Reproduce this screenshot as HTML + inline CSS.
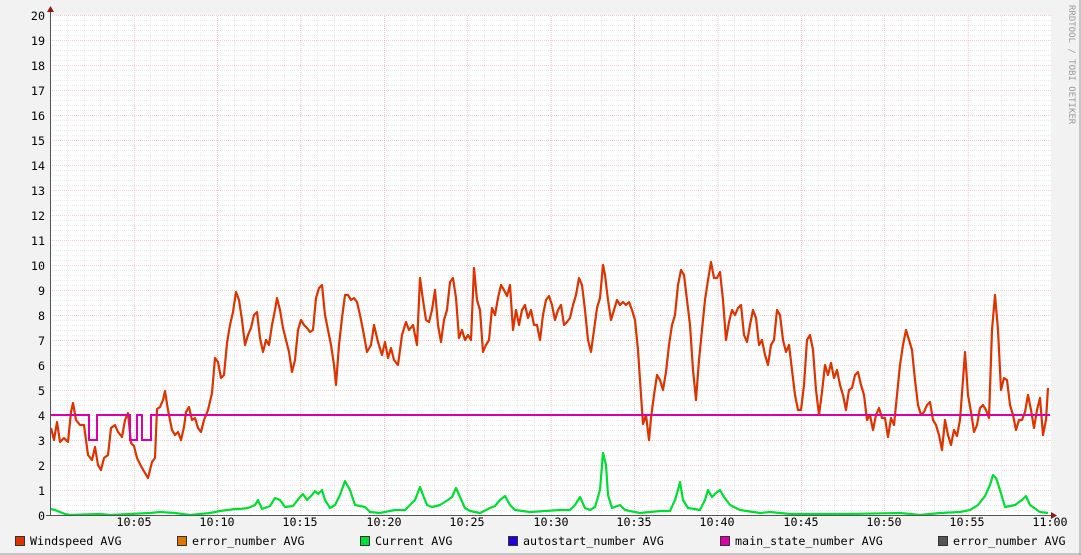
<!DOCTYPE html>
<html><head><meta charset="utf-8"><style>
html,body{margin:0;padding:0;background:#f2f2f2;}
svg{display:block;}
text{font-family:"DejaVu Sans Mono","Liberation Mono",monospace;font-size:11.7px;fill:#000;}
</style></head><body>
<svg width="1081" height="555" viewBox="0 0 1081 555" xmlns="http://www.w3.org/2000/svg">
<defs>
<pattern id="minv" x="50.5" y="0" width="16.68" height="555" patternUnits="userSpaceOnUse">
<line x1="0" y1="0" x2="0" y2="555" stroke="#d8d8d8" stroke-width="1" stroke-dasharray="1,1"/>
</pattern>
<pattern id="minh" x="0" y="15.5" width="1081" height="5" patternUnits="userSpaceOnUse">
<line x1="0" y1="0" x2="1081" y2="0" stroke="#d8d8d8" stroke-width="1" stroke-dasharray="1,1"/>
</pattern>
<pattern id="majv" x="50.5" y="0" width="83.4" height="555" patternUnits="userSpaceOnUse">
<line x1="0" y1="0" x2="0" y2="555" stroke="#eaa0a0" stroke-width="1" stroke-dasharray="1,1"/>
</pattern>
<pattern id="majh" x="0" y="15.5" width="1081" height="25" patternUnits="userSpaceOnUse">
<line x1="0" y1="0" x2="1081" y2="0" stroke="#eaa0a0" stroke-width="1" stroke-dasharray="1,1"/>
</pattern>
</defs>
<rect x="0" y="0" width="1081" height="555" fill="#f2f2f2"/>
<line x1="1080" y1="0" x2="1080" y2="555" stroke="#999" stroke-width="1"/>
<line x1="0" y1="554" x2="1081" y2="554" stroke="#999" stroke-width="1"/>
<rect x="50" y="15" width="1001" height="500" fill="#ffffff"/>
<rect x="50" y="15" width="1001" height="500" fill="url(#minv)"/>
<rect x="50" y="15" width="1001" height="500" fill="url(#minh)"/>
<rect x="50" y="15" width="1001" height="500" fill="url(#majv)"/>
<rect x="50" y="15" width="1001" height="500" fill="url(#majh)"/>

<g text-anchor="end">
<text x="45" y="20">20</text><text x="45" y="45">19</text><text x="45" y="70">18</text><text x="45" y="95">17</text>
<text x="45" y="120">16</text><text x="45" y="145">15</text><text x="45" y="170">14</text><text x="45" y="195">13</text>
<text x="45" y="220">12</text><text x="45" y="245">11</text><text x="45" y="270">10</text><text x="45" y="295">9</text>
<text x="45" y="320">8</text><text x="45" y="345">7</text><text x="45" y="370">6</text><text x="45" y="395">5</text>
<text x="45" y="420">4</text><text x="45" y="445">3</text><text x="45" y="470">2</text><text x="45" y="495">1</text><text x="45" y="520">0</text>
</g>
<g text-anchor="middle">
<text x="134" y="526">10:05</text><text x="217" y="526">10:10</text><text x="300" y="526">10:15</text><text x="384" y="526">10:20</text>
<text x="467" y="526">10:25</text><text x="551" y="526">10:30</text><text x="634" y="526">10:35</text><text x="717" y="526">10:40</text>
<text x="801" y="526">10:45</text><text x="884" y="526">10:50</text><text x="967" y="526">10:55</text><text x="1050" y="526">11:00</text>
</g>

<polyline fill="none" stroke="#00dd33" stroke-width="2.2" stroke-linejoin="round" points="51,509 55,510 60,512 65,514 70,515 100,514 110,515 150,513 160,512 175,513 190,515 210,513 220,511 235,509 240,509 248,508 255,505 258,500 262,509 270,506 275,498 280,500 285,507 293,506 300,497 303,494 307,500 312,495 315,491 318,494 322,490 325,500 330,508 335,505 340,495 345,481 350,490 355,505 365,507 370,512 380,513 395,510 405,510 410,505 415,500 420,487 423,495 427,505 432,507 440,505 448,500 452,497 456,488 460,497 465,508 470,511 480,513 490,508 495,506 500,500 505,496 510,505 515,510 530,512 560,510 570,510 575,505 580,497 585,508 590,510 595,507 600,490 603,453 606,465 608,495 612,508 620,505 625,510 640,513 650,512 660,511 670,511 675,500 678,490 680,482 683,500 688,508 700,510 705,500 708,490 712,497 716,493 720,490 724,497 730,505 740,510 760,513 770,512 790,514 850,514 900,513 920,515 940,513 960,512 970,510 978,505 985,496 990,485 993,475 996,478 1000,490 1005,507 1015,505 1022,500 1026,496 1030,505 1040,512 1048,513"/>

<polyline fill="none" stroke="#dd3300" stroke-width="2.2" stroke-linejoin="round" points="51,428 54,440 57,422 60,442 64,438 68,442 71,412 73,403 76,420 80,425 84,425 88,455 92,460 95,447 98,465 101,470 104,458 108,455 111,428 115,425 118,432 122,437 125,420 128,413 131,443 134,446 137,458 141,466 145,473 148,478 152,462 155,458 157,409 160,407 163,400 165,391 168,410 172,430 175,435 178,432 181,440 184,427 186,412 189,407 192,420 195,418 198,428 201,432 204,420 208,410 212,393 215,358 218,362 221,378 224,375 227,343 230,325 233,312 236,292 239,300 242,320 245,345 248,335 251,328 254,315 257,312 260,338 263,352 266,340 269,345 272,325 275,310 277,298 280,310 283,328 286,340 289,352 292,372 295,360 298,330 301,320 304,325 307,328 310,332 313,330 316,298 319,288 322,285 325,315 328,330 331,345 334,365 336,385 339,345 342,318 345,295 348,295 351,300 354,298 357,302 360,315 363,330 367,352 371,345 374,325 378,342 382,355 385,342 388,358 391,348 394,360 398,365 402,335 406,322 409,330 413,325 417,345 420,278 423,300 426,320 429,322 432,310 435,290 438,325 441,342 444,320 447,310 450,282 453,278 456,298 459,338 462,330 465,340 468,335 471,340 474,268 477,300 480,310 483,352 486,345 489,340 492,308 495,315 498,298 501,285 504,290 507,296 510,285 513,330 516,310 519,325 522,310 525,305 528,318 531,310 534,325 537,325 540,340 543,315 546,300 549,296 552,305 555,320 558,310 561,305 564,325 567,322 570,318 573,305 576,295 579,278 582,285 585,310 588,340 591,352 594,330 597,308 600,298 603,265 605,275 608,300 611,320 614,310 617,300 620,305 623,302 626,305 629,302 632,310 635,320 638,350 641,395 643,424 646,415 649,440 651,418 654,395 657,375 660,380 663,390 666,372 669,345 672,325 675,315 678,285 681,270 684,275 687,300 690,325 693,370 696,400 699,360 702,330 705,300 708,280 711,262 714,278 717,278 720,272 723,300 726,340 729,322 732,310 735,315 738,308 741,305 744,335 747,342 750,325 753,310 756,318 759,345 762,340 765,355 768,365 771,345 774,340 777,310 780,315 783,340 786,352 789,345 792,370 795,395 798,410 801,410 804,385 807,340 810,335 813,350 816,390 819,415 822,392 825,365 828,375 831,363 834,378 837,370 840,385 843,395 846,410 849,390 852,388 855,375 858,372 861,385 864,395 867,420 870,415 873,430 876,415 879,408 882,418 885,418 888,437 891,418 894,425 897,395 900,365 903,345 906,330 909,340 912,350 915,380 918,405 921,415 924,412 927,405 930,402 933,420 936,425 939,435 942,450 945,420 948,435 951,445 954,430 957,436 960,420 963,380 965,352 968,395 971,412 974,432 977,425 980,408 983,405 986,410 989,418 992,330 995,295 998,330 1001,390 1004,378 1007,380 1010,405 1013,415 1016,430 1019,420 1022,420 1025,412 1028,395 1031,410 1034,428 1037,410 1040,398 1043,435 1046,420 1048,388"/>

<polyline fill="none" stroke="#dd00aa" stroke-width="2" points="51,415 89,415 89,440 97,440 97,415 130,415 130,440 137,440 137,415 142,415 142,440 151,440 151,415 1050,415"/>

<line x1="50.5" y1="10" x2="50.5" y2="516" stroke="#555" stroke-width="1"/>
<line x1="46" y1="515.5" x2="1053" y2="515.5" stroke="#555" stroke-width="1"/>
<polygon points="47,12 54,12 50.5,6" fill="#8b1a1a"/>
<polygon points="1051,512 1051,519 1057,515.5" fill="#8b1a1a"/>

<text x="0" y="0" transform="translate(1069,5) rotate(90)" style="font-size:9px;fill:#999">RRDTOOL / TOBI OETIKER</text>

<g>
<rect x="15.5" y="536.5" width="9" height="9" fill="#dd3300" stroke="#333"/>
<text x="30" y="545">Windspeed AVG</text>
<rect x="177.5" y="536.5" width="9" height="9" fill="#dd7700" stroke="#333"/>
<text x="192" y="545">error_number AVG</text>
<rect x="360.5" y="536.5" width="9" height="9" fill="#00dd33" stroke="#333"/>
<text x="375" y="545">Current AVG</text>
<rect x="508.5" y="536.5" width="9" height="9" fill="#2200dd" stroke="#333"/>
<text x="523" y="545">autostart_number AVG</text>
<rect x="720.5" y="536.5" width="9" height="9" fill="#dd00aa" stroke="#333"/>
<text x="735" y="545">main_state_number AVG</text>
<rect x="938.5" y="536.5" width="9" height="9" fill="#555555" stroke="#333"/>
<text x="953" y="545">error_number AVG</text>
</g>
</svg>
</body></html>
